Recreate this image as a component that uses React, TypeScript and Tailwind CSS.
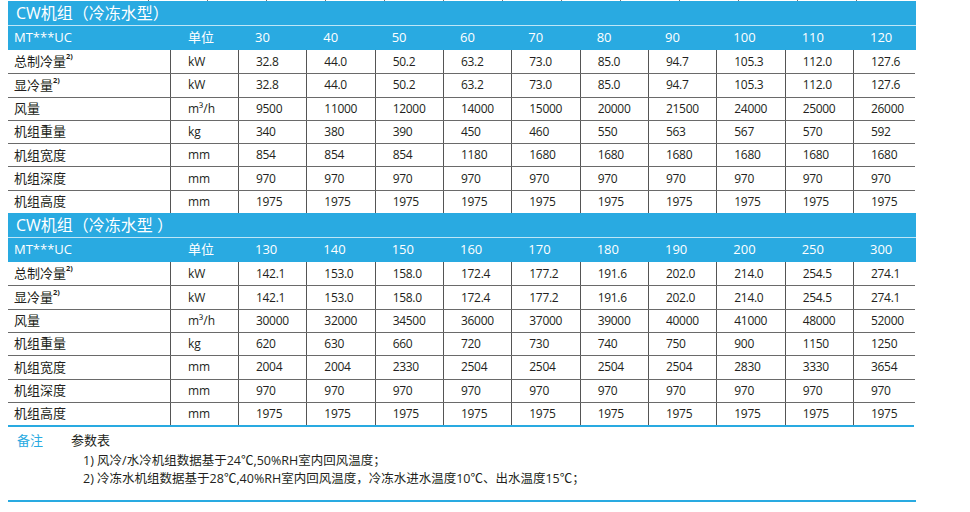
const FONT = { fontFamily: '"Open Sans", "Noto Sans CJK SC", sans-serif' };

type Row = { label: string; sup?: boolean; unit: string; values: string[] };

interface TableData {
  title: string;
  models: string[];
  rows: Row[];
}

const same = (v: string) => Array(10).fill(v);

const tables: TableData[] = [
  {
    title: 'CW机组（冷冻水型）',
    models: ['30', '40', '50', '60', '70', '80', '90', '100', '110', '120'],
    rows: [
      { label: '总制冷量', sup: true, unit: 'kW', values: ['32.8', '44.0', '50.2', '63.2', '73.0', '85.0', '94.7', '105.3', '112.0', '127.6'] },
      { label: '显冷量', sup: true, unit: 'kW', values: ['32.8', '44.0', '50.2', '63.2', '73.0', '85.0', '94.7', '105.3', '112.0', '127.6'] },
      { label: '风量', unit: 'm³/h', values: ['9500', '11000', '12000', '14000', '15000', '20000', '21500', '24000', '25000', '26000'] },
      { label: '机组重量', unit: 'kg', values: ['340', '380', '390', '450', '460', '550', '563', '567', '570', '592'] },
      { label: '机组宽度', unit: 'mm', values: ['854', '854', '854', '1180', '1680', '1680', '1680', '1680', '1680', '1680'] },
      { label: '机组深度', unit: 'mm', values: same('970') },
      { label: '机组高度', unit: 'mm', values: same('1975') },
    ],
  },
  {
    title: 'CW机组（冷冻水型 ）',
    models: ['130', '140', '150', '160', '170', '180', '190', '200', '250', '300'],
    rows: [
      { label: '总制冷量', sup: true, unit: 'kW', values: ['142.1', '153.0', '158.0', '172.4', '177.2', '191.6', '202.0', '214.0', '254.5', '274.1'] },
      { label: '显冷量', sup: true, unit: 'kW', values: ['142.1', '153.0', '158.0', '172.4', '177.2', '191.6', '202.0', '214.0', '254.5', '274.1'] },
      { label: '风量', unit: 'm³/h', values: ['30000', '32000', '34500', '36000', '37000', '39000', '40000', '41000', '48000', '52000'] },
      { label: '机组重量', unit: 'kg', values: ['620', '630', '660', '720', '730', '740', '750', '900', '1150', '1250'] },
      { label: '机组宽度', unit: 'mm', values: ['2004', '2004', '2330', '2504', '2504', '2504', '2504', '2830', '3330', '3654'] },
      { label: '机组深度', unit: 'mm', values: same('970') },
      { label: '机组高度', unit: 'mm', values: same('1975') },
    ],
  },
];

const GRID = 'grid grid-cols-[162px_68px_repeat(9,68.33px)_63px]';

function SpecTable({ data }: { data: TableData }) {
  return (
    <div>
      <div className="h-[25px] bg-[#29aae1] border-b border-[#bfe6f7] pl-2 flex items-center text-white text-[16px] leading-none">
        {data.title}
      </div>
      <div className={`${GRID} h-[24px] bg-[#29aae1] text-white text-[13px] items-center`}>
        <div className="pl-[6px]">MT***UC</div>
        <div className="pl-[18px]">单位</div>
        {data.models.map((m) => (
          <div key={m} className="pl-[17px]">{m}</div>
        ))}
      </div>
      {data.rows.map((r, i) => (
        <div
          key={r.label}
          className={`${GRID} h-[23.3px] text-[12px] text-[#231f20] w-[907px] ${i > 0 ? 'border-t border-[#6a6a6a]' : ''}`}
        >
          <div className="pl-[6px] flex items-center text-[13px]">
            {r.label}
            {r.sup && <sup className="text-[7.5px] font-bold -mt-1">2)</sup>}
          </div>
          <div className="pl-[17px] flex items-center border-l border-[#555]">{r.unit}</div>
          {r.values.map((v, j) => (
            <div key={j} className="pl-[17px] flex items-center border-l border-[#555] tracking-[-0.3px]">
              {v}
            </div>
          ))}
        </div>
      ))}
    </div>
  );
}

export default function App() {
  return (
    <div className="w-[970px] h-[512px] bg-white overflow-hidden" style={FONT}>
      <div className="flex h-px ml-[148px]">
        {Array.from({ length: 13 }).map((_, i) => (
          <div key={i} className="w-[59px] border-l border-[#777]" />
        ))}
      </div>
      <div className="ml-2 w-[908px]">
        <SpecTable data={tables[0]} />
        <SpecTable data={tables[1]} />
        <div className="h-[2px] bg-[#29aae1] w-[906px]" />
        <div className="h-[73px] pt-[4px] text-[#231f20]">
          <div className="flex items-center h-[20px]">
            <span className="ml-[9px] w-[54px] text-[13px] text-[#29aae1]">备注</span>
            <span className="text-[13px]">参数表</span>
          </div>
          <div className="ml-[75px] mt-[1px] text-[12.5px] leading-[18px]">
            <div>1) 风冷/水冷机组数据基于24℃,50%RH室内回风温度；</div>
            <div>2) 冷冻水机组数据基于28℃,40%RH室内回风温度，冷冻水进水温度10℃、出水温度15℃；</div>
          </div>
        </div>
        <div className="h-[2px] bg-[#29aae1]" />
      </div>
    </div>
  );
}
